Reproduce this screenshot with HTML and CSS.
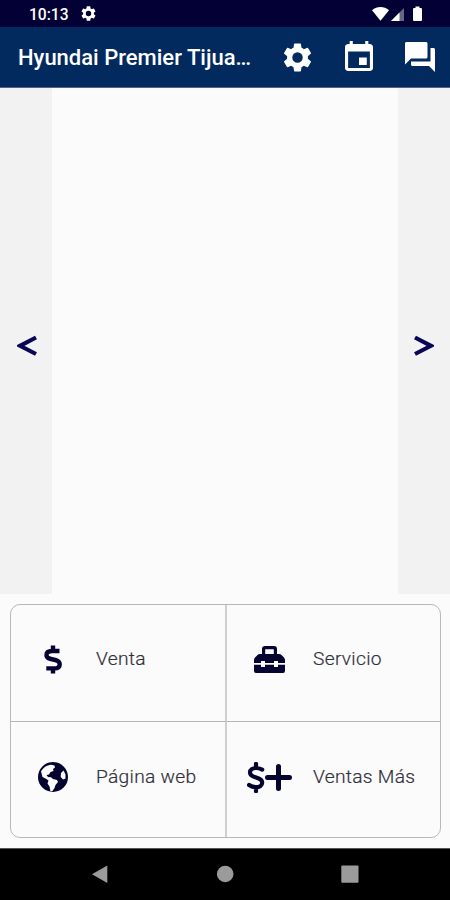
FILE: index.html
```html
<!DOCTYPE html>
<html lang="es">
<head>
<meta charset="utf-8">
<title>Hyundai Premier Tijuana</title>
<link rel="stylesheet" href="styles.css">
</head>
<body>
<svg width="0" height="0" class="defs">
  <symbol id="gear" viewBox="2 2 20 20"><path d="M19.14 12.94c.04-.3.06-.61.06-.94 0-.32-.02-.64-.07-.94l2.03-1.58a.49.49 0 0 0 .12-.61l-1.92-3.32a.49.49 0 0 0-.59-.22l-2.39.96a7 7 0 0 0-1.62-.94l-.36-2.54a.48.48 0 0 0-.48-.41h-3.84a.47.47 0 0 0-.47.41l-.36 2.54c-.59.24-1.13.57-1.62.94l-2.39-.96a.48.48 0 0 0-.59.22L2.74 8.87a.47.47 0 0 0 .12.61l2.03 1.58c-.05.3-.09.63-.09.94s.02.64.07.94l-2.03 1.58a.49.49 0 0 0-.12.61l1.92 3.32c.12.22.37.29.59.22l2.39-.96c.5.38 1.03.7 1.62.94l.36 2.54c.05.24.24.41.48.41h3.84c.24 0 .44-.17.47-.41l.36-2.54a7 7 0 0 0 1.62-.94l2.39.96c.22.08.47 0 .59-.22l1.92-3.32a.47.47 0 0 0-.12-.61zM12 15.6a3.6 3.6 0 1 1 0-7.2 3.6 3.6 0 0 1 0 7.2z"/></symbol>
</svg>
<div class="screen">
  <header class="status">
    <span class="time">10:13</span>
    <svg class="status-gear"><use href="#gear"/></svg>
    <svg class="signals" viewBox="0 0 54 18">
      <path d="M1 5.3C6 .9 13 .9 18 5.3L9.5 15.8z"/>
      <path d="M20 16 33 3v13z" opacity=".4"/><path d="M20 16l8.500-8.500V16z"/>
      <path d="M44.500 1.500h4V3H50q1 0 1 1v11q0 1-1 1h-7q-1 0-1-1V4q0-1 1-1h1.500z"/>
    </svg>
  </header>
  <div class="appbar">
    <h1>Hyundai Premier Tijua…</h1>
    <svg class="action gear"><use href="#gear"/></svg>
    <svg class="action calendar" viewBox="3 1 18 20" preserveAspectRatio="none"><path d="M17 12h-5v5h5zM16 1v2H8V1H6v2H5c-1.110 0-2 .9-2 2v14c0 1.100.89 2 2 2h14c1.100 0 2-.9 2-2V5c0-1.100-.9-2-2-2h-1V1zm3 18H5V8h14z"/></svg>
    <svg class="action chat" viewBox="2 2 20 20"><path d="M21 6h-2v9H6v2c0 .55.45 1 1 1h11l4 4V7c0-.55-.45-1-1-1zm-4 6V3c0-.55-.45-1-1-1H3c-.55 0-1 .45-1 1v14l4-4h10c.55 0 1-.45 1-1z"/></svg>
  </div>
  <main class="carousel">
    <button class="prev" aria-label="Anterior"><svg viewBox="0 0 20 22"><path d="M19 2.500 3 10.800 19 19"/></svg></button>
    <button class="next" aria-label="Siguiente"><svg viewBox="0 0 20 22"><path d="M1 2.500 17 10.800 1 19"/></svg></button>
  </main>
  <section class="panel">
    <div class="grid">
      <div class="cell"><span class="icon"><svg class="dollar sale" viewBox="0 0 18 31"><path d="M15.500 7H8C4.600 7 2.500 8.500 2.500 11c0 6.500 13.200 2.500 13.200 9.200 0 2.800-2.200 4.200-5.200 4.200H2.300M9 1.500V7m0 17v5.500"/></svg></span><span class="label">Venta</span></div>
      <div class="cell"><span class="icon"><svg class="toolbox" viewBox="0 0 31 27"><path fill-rule="evenodd" d="M8 8V3q0-3 3-3h9q3 0 3 3v5h2q1.500 0 2.500 1l2.500 2.500q1 1 1 2.500v3h-7v-2h-4v2h-9v-2H7v2H0v-3q0-1.500 1-2.500L3.500 9Q4.500 8 6 8zm3.200 0h8.600V3.300h-8.600zM0 18.800h7V21h4v-2.200h9V21h4v-2.200h7V25q0 2-2 2H2q-2 0-2-2z"/></svg></span><span class="label">Servicio</span></div>
      <div class="cell"><span class="icon"><svg class="globe" viewBox="0 0 30 30"><circle cx="15" cy="15" r="15"/><path class="land" d="M3 9.500C5 6 9 3 13 2.800l3.500.6.500 2.100-2 1.500.500 2-3 1-1.500 2.500-2.500.500 1.500 2 3 .3 2 1.700 4 1 1 2-2.500 3-1 3-2 3-2 .500-1-5-2-3 1-3-3-2-3-1.500zM25.500 8.500l2 4v4l-2.500 1-2.300-2.500.300-4z"/></svg></span><span class="label">Página web</span></div>
      <div class="cell"><span class="icon"><svg class="dollar" viewBox="0 0 18 31"><path d="M15.200 7.600C13.200 6.600 11 6 9 6 5.500 6 3 7.600 3 10.400c0 6.600 12.200 3.600 12.200 10.100 0 3-2.600 4.700-6.200 4.700-2.700 0-5-.8-6.900-2.200M9 1.800V6m0 19v4.200"/></svg><svg class="plus" viewBox="0 0 27 27"><path d="M13.500 2.500v22M2.500 13.500h22"/></svg></span><span class="label">Ventas Más</span></div>
    </div>
  </section>
  <nav class="navbar">
    <svg viewBox="0 0 450 52"><path d="M92 26.200 107.300 17.500v17.500z"/><circle cx="225.200" cy="26" r="8.300"/><rect x="341.300" y="17.500" width="17.200" height="17.200" rx="1"/></svg>
  </nav>
</div>
</body>
</html>
```

FILE: styles.css
```css
* { box-sizing: border-box; }
body { margin: 0; font-family: Roboto, "Liberation Sans", sans-serif; }
svg { display: block; flex: none; }
.defs { position: absolute; }
.screen { width: 450px; height: 900px; display: flex; flex-direction: column; background: #fbfbfb; overflow: hidden; }
.status { height: 27px; flex: none; background: #020034; color: #fff; fill: #fff; display: flex; align-items: center; padding: 0 25px 0 29px; }
.time { font-size: 15.6px; font-weight: 500; line-height: 20px; width: 52px; padding-top: 2px; }
.status-gear { width: 15px; height: 15px; }
.signals { width: 54px; height: 18px; margin: 1px 0 0 auto; }
.appbar { height: 61px; flex: none; background: #022a5f; border-bottom: 1px solid #516580; display: flex; align-items: center; padding-left: 18px; fill: #fff; }
h1 { margin: 0; padding-top: 1px; width: 265px; color: #fff; font-size: 22px; line-height: 28px; font-weight: 500; white-space: nowrap; }
.gear { width: 29px; height: 29px; }
.calendar { width: 28px; height: 30px; margin: -2px 0 0 33px; }
.chat { width: 30px; height: 30px; margin-left: 32px; }
.carousel { height: 506px; flex: none; display: flex; justify-content: space-between; }
.carousel button { width: 52px; border: 0; padding: 9px 0 0 17px; background: #f2f2f2; display: flex; align-items: center; }
.carousel .next { padding-left: 16px; }
.carousel svg { width: 20px; height: 22px; fill: none; stroke: #080655; stroke-width: 4.2; }
.panel { height: 254px; flex: none; padding: 10px 9px 10px 10px; }
.grid { height: 234px; display: grid; grid-template-columns: 216px 1fr; grid-template-rows: 117px 1fr; border: 1px solid #b8b8b8; border-radius: 10px; }
.cell { display: flex; align-items: center; color: #30303a; font-size: 19.2px; line-height: 26px; white-space: nowrap; padding-bottom: 5px; }
.cell:nth-child(odd) { border-right: 2px solid #cecece; }
.cell:nth-child(-n+2) { border-bottom: 1px solid #b5b5b5; padding-bottom: 8px; }
.cell:nth-child(even) { padding-left: 1px; }
.icon { width: 83px; margin-right: 2px; display: flex; justify-content: center; fill: #05032f; }
.label { font-weight: 300; letter-spacing: .3px; -webkit-text-stroke: .2px #30303a; }
.dollar { width: 18px; height: 31px; fill: none; stroke: #05032f; stroke-width: 4.2; stroke-linecap: round; stroke-linejoin: round; }
.sale { stroke-width: 4.4; stroke-linecap: butt; }
.toolbox { width: 31px; height: 27px; }
.globe { width: 30px; height: 30px; }
.land { fill: #fbfbfb; }
.plus { width: 27px; height: 27px; fill: none; stroke: #05032f; stroke-width: 5; stroke-linecap: round; margin-top: 2px; }
.navbar { height: 52px; flex: none; background: #000; border-top: 1px solid #555; fill: #9b9b9b; }
.navbar svg { width: 450px; height: 52px; margin-top: -1px; }
```
